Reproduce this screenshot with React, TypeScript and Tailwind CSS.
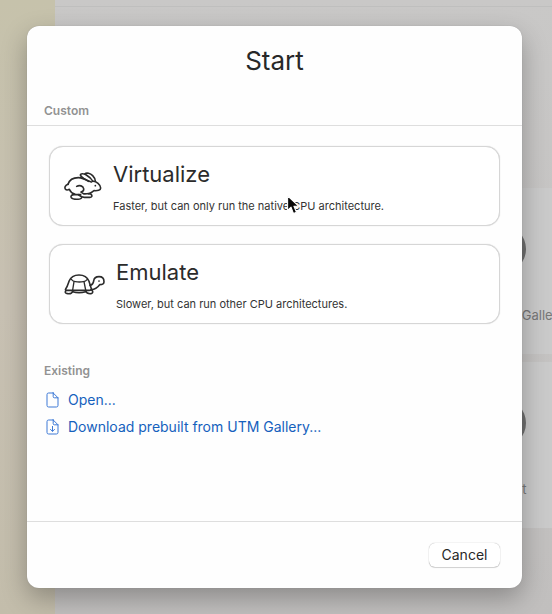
import type { ReactNode } from "react";

function RabbitIcon() {
  return (
    <svg viewBox="72 96 114 87" className="h-[29px] w-[38px] shrink-0" fill="none" stroke="currentColor" strokeWidth="4.8" strokeLinecap="round" strokeLinejoin="round" aria-hidden="true">
      <path d="M84 133C88 120 101 113 115 113C126 113 136 118 146 124" />
      <path d="M84 133C76 136 73 142 76 147C79 151 84 150 88 148C91 155 96 160 104 162" />
      <path d="M154 126C138 121 122 111 121 105C122 99 132 101 139 105C147 110 155 117 158 123" />
      <path d="M134 102C140 97 151 100 158 107C163 112 166 118 166 124" />
      <path d="M158 124C169 123 182 134 182 144C182 151 172 153 162 152C157 156 152 159 146 161" />
      <path d="M110 139C119 134 129 138 131 146C132 151 128 155 123 156L130 161C137 163 146 159 152 162C158 166 157 172 150 172H133C124 172 120 168 115 164" />
      <path d="M122 164H102C94 164 91 169 94 173C98 178 109 178 119 177C126 176 127 172 122 168" />
      <circle cx="166" cy="137" r="2.6" fill="currentColor" stroke="none" />
    </svg>
  );
}

function TurtleIcon() {
  return (
    <svg viewBox="72 100 123 66" className="h-[22px] w-[41px] shrink-0" fill="none" stroke="currentColor" strokeWidth="4.8" strokeLinecap="round" strokeLinejoin="round" aria-hidden="true">
      <path d="M77 148C82 141 84 134 87 125C92 112 103 106 117 106C132 106 142 112 147 125L154 147C155 151 152 152 147 152H82C77 152 75 151 77 148Z" />
      <path d="M94 119Q99 125 106 126Q118 128 130 126Q137 125 142 119" strokeWidth="4" />
      <path d="M102 126L98 151M132 126L137 151" strokeWidth="4" />
      <path d="M99 153C97 159 91 163 83 162C76 162 74 157 78 153" />
      <path d="M98 156C110 160 124 160 137 156" />
      <path d="M136 153C139 159 145 163 153 162C160 160 160 155 154 150" />
      <path d="M150 137C158 136 160 130 161 124C162 116 169 111 177 111C187 111 192 118 192 126C192 133 187 135 179 135C173 143 165 149 154 150" />
      <circle cx="177" cy="124" r="2.6" fill="currentColor" stroke="none" />
    </svg>
  );
}

function DocumentIcon({ download = false }: { download?: boolean }) {
  return (
    <svg viewBox="0 0 13 16" className="h-4 w-[13px] shrink-0" fill="none" stroke="#3d79d6" strokeLinecap="round" strokeLinejoin="round" aria-hidden="true">
      <path d="M7.2 1H2.6Q1 1 1 2.6V13.4Q1 15 2.6 15H10.4Q12 15 12 13.4V5.8L7.2 1ZM7.2 1V4.6Q7.2 5.8 8.4 5.8H12" />
      {download && <path d="M6.5 7.4V12.2M4.5 10.4L6.5 12.4L8.5 10.4" />}
    </svg>
  );
}

function ModeButton({ icon, title, detail }: { icon: ReactNode; title: string; detail: string }) {
  return (
    <button type="button" className="flex h-20 w-full items-center gap-[11px] rounded-[14px] border border-[#d6d6d6] bg-white pl-[14px] text-left text-[#2b2b2b] shadow-[0_0_1px_#c8c8c8]">
      {icon}
      <span className="flex flex-col gap-2">
        <span className="text-[22px] leading-8">{title}</span>
        <span className="text-[11px] leading-4 text-[#333333]">{detail}</span>
      </span>
    </button>
  );
}

function GalleryTile({ label }: { label: string }) {
  return (
    <div className="flex h-[166px] w-[280px] shrink-0 flex-col items-center gap-8 bg-[#cacaca] pt-[37px] text-[13px] leading-5 text-[#777777]">
      <div className="size-12 rounded-full bg-[#6e6e6e]" />
      <span className="whitespace-nowrap">{label}</span>
    </div>
  );
}

function Backdrop() {
  return (
    <div className="absolute inset-0 flex overflow-hidden" aria-hidden="true">
      <div className="w-[55px] shrink-0 bg-linear-to-b from-[#c6c2ab] via-[#c8c1b3] to-[#c3bdab]" />
      <div className="flex min-w-0 grow flex-col bg-linear-to-b from-[#c9c8c7] to-[#c1bfbe]">
        <div className="h-[7px] shrink-0 border-b border-[#bfbfbe]" />
        <div className="flex flex-col gap-2 pt-[181px] pl-[307px]">
          <GalleryTile label="Browse UTM Gallery" />
          <GalleryTile label="Support" />
        </div>
      </div>
    </div>
  );
}

function Pointer() {
  return (
    <svg viewBox="0 0 14 20" className="pointer-events-none absolute top-[48px] left-[237px] h-[22px] w-[15px]" aria-hidden="true">
      <path d="M1.5 1.5V15L4.7 12L7 18L9.8 16.8L7.4 11.2H12Z" fill="#080808" stroke="#ffffff" strokeWidth="1" strokeLinejoin="round" />
    </svg>
  );
}

export default function App() {
  return (
    <div className="relative flex min-h-screen flex-col font-['Inter',sans-serif]">
      <Backdrop />
      <main className="relative mr-[30px] mt-[26px] mb-[26px] ml-[27px] flex grow flex-col rounded-xl bg-[#fefefe] shadow-[0_0_1px_#77777799,0_10px_26px_#00000048]" role="dialog" aria-labelledby="title">
        <header className="flex flex-col border-b border-[#dedede]">
          <h1 id="title" className="pt-[15px] text-center text-[26px] leading-10 text-[#282828]">Start</h1>
          <h2 className="px-[17px] pt-[22px] pb-[6px] text-[12px] leading-4 font-semibold text-[#929292]">Custom</h2>
        </header>
        <section className="relative flex flex-col gap-[18px] px-[22px] pt-5">
          <div className="relative">
            <ModeButton icon={<RabbitIcon />} title="Virtualize" detail="Faster, but can only run the native CPU architecture." />
            <Pointer />
          </div>
          <ModeButton icon={<TurtleIcon />} title="Emulate" detail="Slower, but can run other CPU architectures." />
        </section>
        <section className="flex grow flex-col px-[17px] pt-[39px]">
          <h2 className="text-[12px] leading-4 font-semibold text-[#929292]">Existing</h2>
          <nav className="flex flex-col items-start gap-[7px] pt-[11px] pl-[2px] text-[14px] leading-5 text-[#1561bd]">
            <a href="#open" className="flex items-center gap-[9px]"><DocumentIcon />Open...</a>
            <a href="#gallery" className="flex items-center gap-[9px]"><DocumentIcon download />Download prebuilt from UTM Gallery...</a>
          </nav>
        </section>
        <footer className="flex justify-end border-t border-[#dedede] px-[22px] pt-[21px] pb-[21px]">
          <button type="button" className="h-6 w-[71px] rounded-md bg-white text-[14px] leading-5 text-[#282828] shadow-[0_0_1px_#00000066,0_1px_1px_#00000026]">Cancel</button>
        </footer>
      </main>
    </div>
  );
}
